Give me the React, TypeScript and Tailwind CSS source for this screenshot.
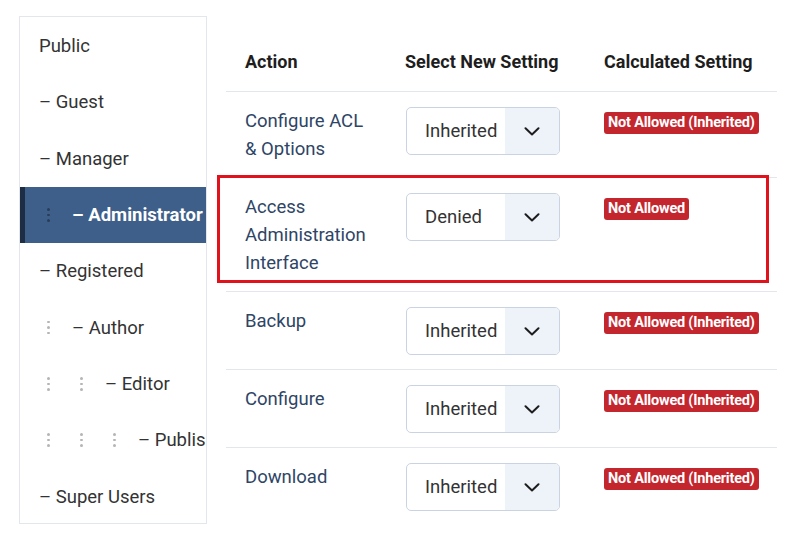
import React from 'react';

// --- Data ---
const groups = [
  { name: 'Public', level: 0, dash: false },
  { name: 'Guest', level: 0, dash: true },
  { name: 'Manager', level: 0, dash: true },
  { name: 'Administrator', level: 1, dash: true, active: true },
  { name: 'Registered', level: 0, dash: true },
  { name: 'Author', level: 1, dash: true },
  { name: 'Editor', level: 2, dash: true },
  { name: 'Publisher', level: 3, dash: true },
  { name: 'Super Users', level: 0, dash: true },
];

const actions = [
  { label: ['Configure ACL', '& Options'], value: 'Inherited', calc: 'Not Allowed (Inherited)' },
  { label: ['Access', 'Administration', 'Interface'], value: 'Denied', calc: 'Not Allowed', highlight: true },
  { label: ['Backup'], value: 'Inherited', calc: 'Not Allowed (Inherited)' },
  { label: ['Configure'], value: 'Inherited', calc: 'Not Allowed (Inherited)' },
  { label: ['Download'], value: 'Inherited', calc: 'Not Allowed (Inherited)' },
];

// --- Components ---
function Dots({ active }: { active?: boolean }) {
  const c = active ? 'bg-[#2a3d58]' : 'bg-[#b5b5b5]';
  return (
    <span className="w-[33px] flex-shrink-0 flex">
      <span className="ml-[8px] flex flex-col gap-[3px]">
        <span className={`w-[2.5px] h-[2.5px] rounded-full ${c}`} />
        <span className={`w-[2.5px] h-[2.5px] rounded-full ${c}`} />
        <span className={`w-[2.5px] h-[2.5px] rounded-full ${c}`} />
      </span>
    </span>
  );
}

function GroupTree() {
  return (
    <div className="w-[188px] h-[508px] border border-[#e3e6ea] flex-shrink-0 overflow-hidden py-[1px]">
      {groups.map((g, i) => (
        <div
          key={i}
          className={`h-[56.3px] flex items-center whitespace-nowrap ${
            g.active
              ? 'bg-[#3e5f8a] border-l-[5px] border-[#1d2d44] pl-[14px] text-white font-bold'
              : 'pl-[19px] text-[#333]'
          }`}
        >
          {Array.from({ length: g.level }).map((_, j) => (
            <Dots key={j} active={g.active} />
          ))}
          <span>{g.dash ? `– ${g.name}` : g.name}</span>
        </div>
      ))}
    </div>
  );
}

function SelectBox({ value }: { value: string }) {
  return (
    <div className="w-[154px] h-[48px] border border-[#c9d3e2] rounded-[5px] flex overflow-hidden bg-white">
      <div className="flex-1 flex items-center pl-[18px] text-[#333]">{value}</div>
      <div className="w-[54px] bg-[#eef2f9] flex items-center justify-center">
        <svg width="16" height="9" viewBox="0 0 16 9" fill="none">
          <polyline points="1.5,1.2 8,7.5 14.5,1.2" stroke="#1e1e1e" strokeWidth="2" strokeLinecap="round" strokeLinejoin="round" />
        </svg>
      </div>
    </div>
  );
}

function Badge({ text }: { text: string }) {
  return (
    <span className="inline-block bg-[#c4262e] text-white text-[14.5px] font-bold leading-[22px] h-[22px] px-[4px] rounded-[3px] whitespace-nowrap tracking-[-0.2px]">
      {text}
    </span>
  );
}

function PermissionTable() {
  return (
    <div className="w-[551px] ml-[19px] mt-[33px]">
      <div className="grid grid-cols-[160px_199px_192px] border-b border-[#e3e6ea] pt-[15px] pb-[15px] font-bold text-[18px] text-[#1e1e1e]">
        <div className="pl-[19px]">Action</div>
        <div className="pl-[19px]">Select New Setting</div>
        <div className="pl-[19px]">Calculated Setting</div>
      </div>
      {actions.map((a, i) => (
        <div
          key={i}
          className="relative grid grid-cols-[160px_199px_192px] border-b border-[#e3e6ea] last:border-b-0 pt-[15px] pb-[14px]"
        >
          <div className="pl-[19px] text-[#2e4566]">
            {a.label.map((l, j) => (
              <div key={j}>{l}</div>
            ))}
          </div>
          <div className="pl-[20px]">
            <SelectBox value={a.value} />
          </div>
          <div className="pl-[19px]">
            <Badge text={a.calc} />
          </div>
          {a.highlight && (
            <div className="absolute left-[-9px] right-[8px] top-[-3px] bottom-[8px] border-[3px] border-[#e0121c] pointer-events-none" />
          )}
        </div>
      ))}
    </div>
  );
}

export default function App() {
  return (
    <div
      className="w-[800px] h-[542px] bg-white flex items-start overflow-hidden text-[18.5px] leading-[28px]"
      style={{ fontFamily: 'Roboto, "Liberation Sans", sans-serif' }}
    >
      <div className="ml-[19px] mt-[16px]">
        <GroupTree />
      </div>
      <PermissionTable />
    </div>
  );
}
